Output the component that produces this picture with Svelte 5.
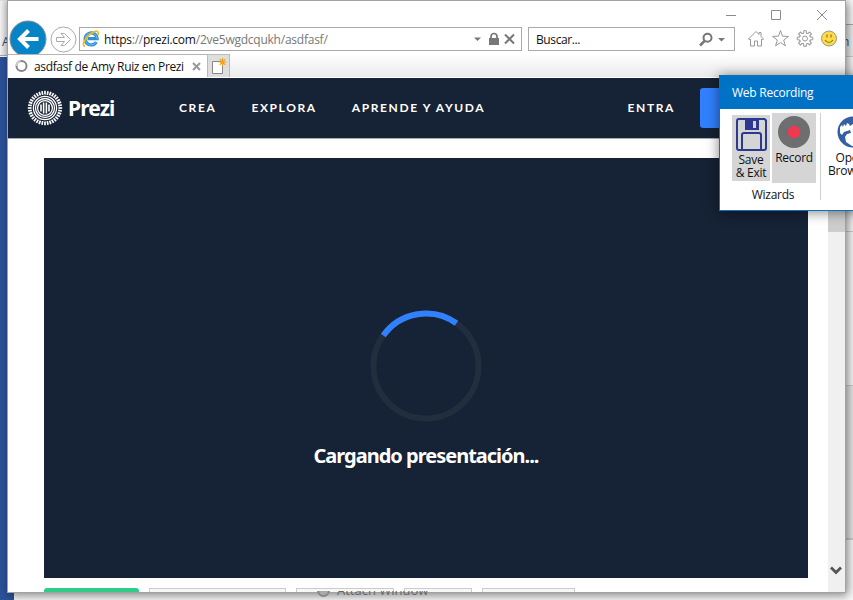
<script>
  const rays = Array.from({ length: 36 }, (_, i) => i * 10);
  const teeth = Array.from({ length: 8 }, (_, i) => i * 45);
  const nav = [
    { label: 'CREA', gap: 0 },
    { label: 'EXPLORA', gap: 35 },
    { label: 'APRENDE Y AYUDA', gap: 35 }
  ];
</script>

<div class="desktop">
  <div class="under-left"><span>A</span></div>
  <div class="under-blue"></div>
  <div class="under-line"></div>
  <div class="under-right"><i class="r1">n</i><i class="r2"></i><i class="r3"></i><i class="r4"></i><i class="r5"></i></div>

  <main class="browser">
    <div class="titlebar">
      <svg width="104" height="13" viewBox="0 0 104 13" fill="none" stroke="#8b8b8b">
        <path d="M1 7.500h10M46.500 2.500h9v9h-9zM92 2l10 10M102 2l-10 10" />
      </svg>
    </div>
    <div class="toolbar">
      <svg class="back" width="39" height="34" viewBox="0 0 39 34">
        <circle cx="20" cy="19" r="18" fill="#0784c6" stroke="#888b8d" />
        <path d="M30.500 19H12M20.500 10.500L12 19l8.500 8.500" fill="none" stroke="#fff" stroke-width="4" />
      </svg>
      <svg class="forward" width="27" height="27" viewBox="0 0 27 27" fill="#fff" stroke="#aaa">
        <circle cx="13.500" cy="13.500" r="12.500" />
        <path d="M6.500 11.500h8L11 7.500h3.500l6 6-6 6H11l3.500-4h-8z" />
      </svg>
      <div class="address">
        <svg width="18" height="18" viewBox="0 0 18 18" fill="none">
          <path d="M14.300 12a6 6 0 1 1 .8-3.300H5.500" stroke="#2f8fd3" stroke-width="3.200" />
          <path d="M14.300 12a6 6 0 1 1 .8-3.300" stroke="#78c8f5" stroke-width=".8" />
          <path d="M3 16.500C-1 15.500 3.500 7 9 3.500s8-3 7 1.500" stroke="#f2b91d" stroke-width="1.700" />
        </svg>
        <span class="url">https<em>://</em>prezi.com<em>/2ve5wgdcqukh/asdfasf/</em></span>
        <svg class="address-icons" width="42" height="16" viewBox="0 0 42 16">
          <path d="M0 6.500h7L3.500 10z" fill="#777" />
          <path d="M15 7h10v7H15z" fill="#777" />
          <path d="M17 8V5.500a3 3 0 0 1 6 0V8" fill="none" stroke="#777" stroke-width="1.700" />
          <path d="M31 3.500l9 9M40 3.500l-9 9" stroke="#777" stroke-width="2" />
        </svg>
      </div>
      <div class="search">
        <span>Buscar...</span>
        <svg width="28" height="16" viewBox="0 0 28 16" fill="none" stroke="#777">
          <circle cx="8.500" cy="6.800" r="4" stroke-width="2" />
          <path d="M5.500 10L1 14.500" stroke-width="2.500" />
          <path d="M19 7h7L22.500 10.500z" fill="#777" stroke="none" />
        </svg>
      </div>
      <svg class="tools" width="92" height="20" viewBox="0 0 92 20" fill="#fff" stroke="#999">
        <path d="M1.500 10L9 2.500l3 3v-2h2v4L16.500 10l-1 1-1-1v7h-4v-5h-3v5h-4v-7l-1 1z" />
        <path d="M33.500 1.500l2 5.700 6 .2-4.800 3.600 1.700 5.900-4.900-3.500-4.900 3.500 1.700-5.900-4.800-3.600 6-.2z" />
        <g transform="translate(58 9.500)">
          {#each teeth as a}
            <path d="M-3-4.800L-1.300-5.500V-7.800h2.600v2.300L3-4.800" transform="rotate({a})" />
          {/each}
          <circle r="2.500" />
        </g>
        <circle cx="82" cy="9.500" r="7.500" fill="#ffdb43" stroke="#989890" />
        <path d="M80 5.500v3M84 5.500v3M78 11q4 5 8 0" fill="none" stroke="#8b752a" stroke-width="1.200" />
      </svg>
    </div>
    <div class="tabs">
      <div class="tab">
        <svg width="14" height="14" viewBox="0 0 14 14" fill="none" stroke-width="2">
          <circle cx="7.500" cy="7" r="5" stroke="#858585" />
          <path d="M2.500 7a5 5 0 0 1 4-4.900" stroke="#ccc" />
        </svg>
        <span>asdfasf de Amy Ruiz en Prezi</span>
        <svg width="9" height="9" viewBox="0 0 9 9" stroke="#999" stroke-width="2"><path d="M1 1l7 7M8 1L1 8" /></svg>
      </div>
      <div class="newtab">
        <svg width="16" height="18" viewBox="0 0 16 18">
          <path d="M.5 4.500h10v12H.5z" fill="#fff" stroke="#888" />
          <path d="M10.500 1v8M6.500 5h8M7.700 2.200l5.600 5.600M13.300 2.200L7.700 7.800" stroke="#f2a21b" stroke-width="1.200" />
        </svg>
      </div>
    </div>
    <div class="viewport">
      <div class="page">
        <header>
          <svg class="mark" width="36" height="36" viewBox="-18 -18 36 36" fill="none" stroke="#fff">
            {#each rays as a}
              <path d="M0-13.400V-17.200" stroke-width="1.700" transform="rotate({a})" />
            {/each}
            <circle r="11.600" stroke-width="1.300" />
            <circle r="9.500" stroke-width="1.300" />
            <circle r="7.400" stroke-width="1.300" />
            <path d="M-4-3.500v7M-1.400-5.500v11M1.400-5.500v11M4-3.500v7" stroke-width="1.600" />
          </svg>
          <strong>Prezi</strong>
          <nav>
            {#each nav as item}
              <span style="margin-left:{item.gap}px">{item.label}</span>
            {/each}
          </nav>
          <span class="login">ENTRA</span>
          <span class="cta"></span>
        </header>
        <section class="player">
          <svg width="112" height="112" viewBox="-56 -56 112 112" fill="none" stroke-width="6">
            <circle r="52.500" stroke="#222e3e" />
            <path d="M-42.700-30.500A52.500 52.500 0 0 1 30.500-42.700" stroke="#3181ff" />
          </svg>
          <p>Cargando presentación...</p>
        </section>
        <div class="actions">
          <i class="green"></i><i class="b1"></i><i class="b2"></i><i class="b3"></i><i class="b4"></i>
        </div>
      </div>
      <div class="scroll">
        <div class="thumb"></div>
        <svg width="13" height="9" viewBox="0 0 13 9" fill="none" stroke="#555" stroke-width="2.800"><path d="M1 1.500l5 5 5-5" /></svg>
      </div>
    </div>
  </main>

  <div class="attach"><div><i></i><span>Attach Window</span></div></div>

  <aside class="recorder">
    <div class="rec-title">Web Recording</div>
    <div class="rec-body">
      <div class="wizards">
        <div class="buttons">
          <div class="save">
            <svg width="31" height="33" viewBox="0 0 31 33" fill="none" stroke="#2b3990" stroke-width="2">
              <path d="M3 1h25.500L30 2.500V30q0 2-2 2H3q-2 0-2-2V3q0-2 2-2z" />
              <path d="M6 31V17q0-2 2-2h15q2 0 2 2v14" />
              <path d="M9 1h14v11H9z" fill="#2b3990" stroke="none" />
              <path d="M17 3h3v7h-3z" fill="#d5d5d5" stroke="none" />
            </svg>
            <span>Save<br />&amp; Exit</span>
          </div>
          <div class="record">
            <svg width="32" height="32" viewBox="0 0 32 32">
              <circle cx="16" cy="16" r="16" fill="#6d6e70" />
              <circle cx="16" cy="16" r="6.200" fill="#f0384f" />
            </svg>
            <span>Record</span>
          </div>
        </div>
        <div class="caption">Wizards</div>
      </div>
      <div class="open">
        <svg width="32" height="32" viewBox="0 0 32 32">
          <circle cx="16" cy="16" r="15.500" fill="#355fa3" />
          <path d="M3 17l0-6 2-2 1 2 1-3 2 2 1-3 2 1 1 2 3-2V4l6-1 7 8 0 10-6 7-8 2-6-4-1-5 2-3 4-1-1-3-3 1-3 1-2 3z" fill="#fff" />
        </svg>
        <span>Open<br />Browser</span>
      </div>
    </div>
  </aside>
</div>

<style>
  :global(body) { margin: 0; overflow: hidden; }
  * { box-sizing: border-box; }
  svg { display: block; flex: none; }
  .desktop { position: relative; width: 853px; height: 600px; overflow: hidden; background: #f5f5f5; font: 12px/16px "Open Sans", "Noto Sans", sans-serif; color: #111; }
  .under-left { position: absolute; left: 0; top: 0; width: 8px; height: 56px; background: linear-gradient(90deg, #f3f3f3, #d5d5d5); border-bottom: 1px solid #aaa; padding-top: 34px; }
  .under-left span { margin-left: 2px; color: #244884; }
  .under-blue { position: absolute; left: 0; top: 57px; width: 14px; height: 543px; background: #2b5197; }
  .under-line { position: absolute; left: 0; top: 0; width: 853px; height: 1px; background: #ddd; }
  .under-right { position: absolute; left: 846px; top: 0; width: 7px; height: 600px; background: #f8f8f8; display: flex; flex-direction: column; }
  .under-right i { display: block; flex: none; font-style: normal; border-bottom: 1px solid #ccc; }
  .under-right .r1 { margin-top: 24px; height: 33px; border-top: 1px solid #aaa; background: #eee; color: #244884; padding: 9px 0 0 0; text-indent: -4px; }
  .r2 { height: 175px; }
  .r3 { height: 154px; }
  .r4 { height: 153px; background: #e7e7e7; }
  .browser { position: absolute; left: 7px; top: 0; width: 839px; height: 593px; border: 1px solid #a2a2a2; background: #fff; box-shadow: 2px 2px 9px rgba(0, 0, 0, .48); display: flex; flex-direction: column; }
  .titlebar { height: 25px; display: flex; justify-content: flex-end; padding: 7px 16px 0 0; }
  .toolbar { height: 28px; display: flex; align-items: flex-start; }
  .back { margin-top: -6px; }
  .forward { margin: 0 0 0 3px; }
  .address { margin: 1px 0 0 2px; width: 443px; height: 24px; border: 1px solid #aaa; display: flex; align-items: center; padding-left: 2px; }
  .url { margin: 1px 0 0 4px; letter-spacing: -.24px; }
  .url em { font-style: normal; color: #777; }
  .address-icons { margin: 0 5px 0 auto; }
  .search { margin: 1px 0 0 6px; width: 207px; height: 24px; border: 1px solid #aaa; display: flex; align-items: center; justify-content: space-between; padding: 0 7px; letter-spacing: -.4px; }
  .search span { margin-top: 2px; }
  .tools { margin: 3px 0 0 12px; }
  .tabs { height: 24px; display: flex; background: linear-gradient(#fff, #ebebeb); border-bottom: 1px solid #fff; }
  .tab { width: 199px; border: 1px solid #b5b5b5; border-width: 1px 0 0; background: #fff; display: flex; align-items: center; padding: 0 5px 0 6px; }
  .tab span { margin: 2px 0 0 6px; width: 158px; white-space: nowrap; letter-spacing: -.35px; }
  .newtab { width: 23px; border: 1px solid #bbb; border-bottom: 0; background: #dedede; padding: 2px 0 0 4px; }
  .viewport { flex: 1; min-height: 0; display: flex; }
  .page { width: 820px; display: flex; flex-direction: column; overflow: hidden; }
  header { height: 61px; flex: none; background: #162235; border-bottom: 1px solid #aaa; display: flex; align-items: center; padding: 0 0 1px 19px; color: #fff; }
  header strong { font: bold 21px/24px "Noto Sans", sans-serif; width: 48px; margin-left: 5px; letter-spacing: -.9px; }
  nav { display: flex; margin-left: 63px; }
  nav span, .login { font: 700 12px/16px Lato, sans-serif; letter-spacing: 1.620px; white-space: nowrap; }
  .login { margin-left: auto; margin-right: 25px; }
  .cta { width: 128px; height: 40px; border-radius: 3px 0 0 3px; background: #3181ff; }
  .player { width: 764px; height: 420px; flex: none; margin: 19px 0 0 36px; background: #162235; display: flex; flex-direction: column; align-items: center; padding-top: 152px; }
  .player p { margin: 20px 0 0; color: #fff; font: bold 20px/28px "Noto Sans", sans-serif; letter-spacing: -1px; white-space: nowrap; }
  .actions { flex: none; height: 4px; margin: 10px 0 0 36px; display: flex; overflow: hidden; }
  .actions i { flex: none; height: 30px; border: 1px solid #ccc; background: #f7f7f7; margin-left: 10px; }
  .actions .green { width: 95px; margin: 0; background: #2ecc87; border: 0; border-radius: 3px; }
  .b1 { width: 137px; } .b2 { width: 98px; } .b3 { width: 68px; } .b4 { width: 93px; }
  .scroll { width: 17px; background: #f0f0f0; display: flex; flex-direction: column; justify-content: space-between; align-items: center; padding: 17px 0 17px; }
  .thumb { height: 137px; width: 17px; background: #cdcdcd; }
  .attach { position: absolute; left: 317px; top: 591px; height: 6px; overflow: hidden; color: #666; }
  .attach div { display: flex; align-items: center; margin-top: -9px; }
  .attach i { width: 13px; height: 13px; border-radius: 50%; border: 2px solid #888; background: #aaa; }
  .attach span { margin-left: 7px; font-size: 13px; line-height: 16px; }
  .recorder { position: absolute; left: 719px; top: 75px; width: 160px; height: 136px; border: 1px solid #0872bf; background: #fff; box-shadow: 0 1px 12px rgba(0, 0, 0, .5); }
  .rec-title { height: 33px; background: #0072c6; color: #fff; line-height: 33px; padding-left: 12px; letter-spacing: -.25px; }
  .rec-body { display: flex; }
  .wizards { width: 101px; height: 87px; margin-top: 4px; border-right: 1px solid #d0d0d0; padding-left: 12px; flex: none; }
  .buttons { display: flex; height: 72px; letter-spacing: -.3px; line-height: 13px; text-align: center; }
  .save { width: 38px; height: 66px; margin-top: 2px; background: #d5d5d5; display: flex; flex-direction: column; align-items: center; padding-top: 3px; }
  .save span { margin-top: 2px; white-space: nowrap; }
  .record { margin-left: 2px; width: 44px; height: 70px; background: #d5d5d5; display: flex; flex-direction: column; align-items: center; padding-top: 3px; }
  .record span { margin-top: 3px; letter-spacing: -.3px; }
  .caption { margin-top: 2px; margin-left: -1px; text-align: center; width: 84px; letter-spacing: -.25px; }
  .open { margin: 7px 0 0 2px; width: 58px; flex: none; display: flex; flex-direction: column; align-items: center; text-align: center; line-height: 13px; letter-spacing: -.2px; }
  .open svg { margin-left: 2px; }
  .open span { margin: 3px 3px 0 0; }
</style>
